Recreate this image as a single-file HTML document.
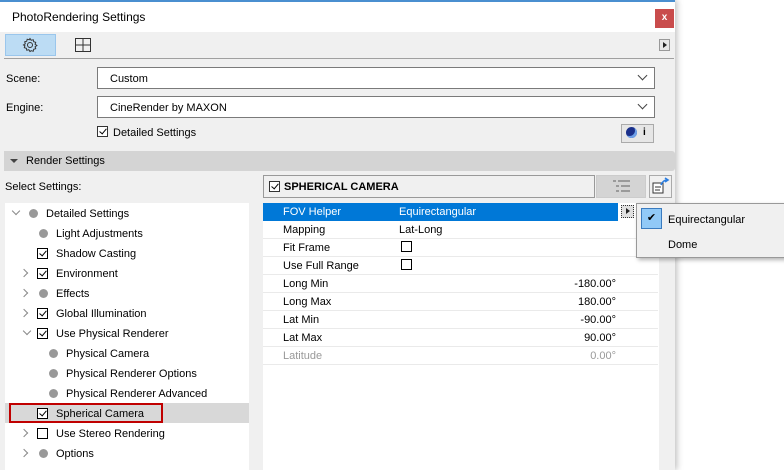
<!DOCTYPE html>
<html><head><style>
body{margin:0;width:784px;height:470px;background:#fff;font-family:"Liberation Sans",sans-serif;font-size:11px;color:#000;position:relative;overflow:hidden}
.a{position:absolute}
.win{left:0;top:0;width:675px;height:470px;background:#f0f0f0;box-shadow:2px 0 6px rgba(0,0,0,.25)}
.dd{background:#fff;border:1px solid #7a7a7a;box-sizing:border-box;height:22px;padding:5px 0 0 12px}
.chev{position:absolute;right:8px;top:4px;width:6px;height:6px;border-right:1px solid #444;border-bottom:1px solid #444;transform:rotate(45deg)}
.cb{position:absolute;width:11px;height:11px;border:1px solid #000;background:#fff;box-sizing:border-box}
.cb.k::after{content:"";position:absolute;left:3px;top:0px;width:3px;height:6px;border-right:1.6px solid #000;border-bottom:1.6px solid #000;transform:rotate(40deg)}
.dot{position:absolute;width:9px;height:9px;border-radius:50%;background:#999}
.tr{position:absolute;left:0;width:245px;height:20px}
.tr span{position:absolute;top:5px}
.ar{position:absolute;width:5px;height:5px;border-right:1px solid #888;border-bottom:1px solid #888}
.row{position:absolute;left:263px;width:395px;height:17px;border-bottom:1px solid #eaeaea}
.row .l{position:absolute;left:20px;top:3px}
.row .v{position:absolute;left:136px;top:3px}
.row .n{position:absolute;right:42px;top:3px}
</style></head><body>
<div class="a win">
 <div class="a" style="left:0;top:0;width:675px;height:2px;background:#4a8fd0"></div>
 <div class="a" style="left:0;top:2px;width:675px;height:30px;background:#fff"></div>
 <div class="a" style="left:12px;top:10px;font-size:12px">PhotoRendering Settings</div>
 <div class="a" style="left:655px;top:9px;width:19px;height:19px;background:#c94c4c;color:#fff;font-size:10px;text-align:center;line-height:18px;font-weight:bold">x</div>
 <div class="a" style="left:5px;top:34px;width:51px;height:22px;background:#bcdcf4;border:1px solid #9ac6ec;box-sizing:border-box"></div>
 <svg class="a" style="left:22px;top:37px" width="16" height="16" viewBox="0 0 16 16"><circle cx="8" cy="8" r="2.5" fill="none" stroke="#333"/><path d="M8 1.5l1.2 1.8 2-.6.5 2 2 .6-.6 2 1.8 1.2-1.8 1.2.6 2-2 .6-.5 2-2-.6L8 14.5l-1.2-1.8-2 .6-.5-2-2-.6.6-2L1.5 8l1.8-1.2-.6-2 2-.6.5-2 2 .6z" fill="none" stroke="#333"/></svg>
 <svg class="a" style="left:75px;top:38px" width="16" height="14"><rect x=".5" y=".5" width="15" height="13" fill="none" stroke="#333"/><path d="M8 .5v13M.5 7h15" stroke="#333"/></svg>
 <div class="a" style="left:659px;top:39px;width:11px;height:12px;border:1px solid #999;background:#e8e8e8;box-sizing:border-box"></div>
 <div class="a" style="left:663px;top:42px;width:0;height:0;border-left:4px solid #222;border-top:3px solid transparent;border-bottom:3px solid transparent"></div>
 <div class="a" style="left:4px;top:58px;width:670px;height:1px;background:#a0a0a0"></div>
 <div class="a" style="left:6px;top:73px">Scene:</div>
 <div class="a dd" style="left:97px;top:67px;width:558px">Custom<div class="chev"></div></div>
 <div class="a" style="left:6px;top:102px">Engine:</div>
 <div class="a dd" style="left:97px;top:96px;width:558px">CineRender by MAXON<div class="chev"></div></div>
 <div class="cb k" style="left:97px;top:126px;border-color:#333"></div>
 <div class="a" style="left:113px;top:127px">Detailed Settings</div>
 <div class="a" style="left:621px;top:124px;width:33px;height:19px;border:1px solid #aaa;box-sizing:border-box;background:#e6e6e6"></div>
 <div class="a" style="left:626px;top:127px;width:11px;height:11px;border-radius:50%;background:#1a2f8a;box-shadow:inset -2px -2px 0 #6ea0e8"></div>
 <div class="a" style="left:643px;top:127px;font-weight:bold;font-size:10px">i</div>
 <div class="a" style="left:4px;top:151px;width:671px;height:20px;background:#d4d4d4;border-radius:0 3px 3px 0"></div>
 <div class="a" style="left:10px;top:159px;border-top:4px solid #444;border-left:4px solid transparent;border-right:4px solid transparent"></div>
 <div class="a" style="left:26px;top:155px">Render Settings</div>
 <div class="a" style="left:5px;top:181px">Select Settings:</div>
 <div class="a" style="left:263px;top:175px;width:332px;height:23px;border:1px solid #999;box-sizing:border-box"></div>
 <div class="cb k" style="left:269px;top:181px;border-color:#333"></div>
 <div class="a" style="left:284px;top:181px;font-weight:bold">SPHERICAL CAMERA</div>
 <div class="a" style="left:596px;top:175px;width:50px;height:23px;background:#d4d4d4;border:1px solid #ccc;box-sizing:border-box"></div>
 <svg class="a" style="left:613px;top:180px" width="17" height="12"><g fill="#9a9a9a"><rect x="0" y="0" width="3" height="2"/><rect x="5" y="0" width="12" height="2"/><rect x="3" y="5" width="3" height="2"/><rect x="8" y="5" width="9" height="2"/><rect x="3" y="10" width="3" height="2"/><rect x="8" y="10" width="9" height="2"/></g></svg>
 <div class="a" style="left:649px;top:175px;width:23px;height:23px;border:1px solid #aaa;box-sizing:border-box"></div>
 <svg class="a" style="left:652px;top:177px" width="18" height="18"><rect x="1" y="6" width="10" height="10" fill="#fff" stroke="#333"/><path d="M3 10h6M3 13h5" stroke="#333"/><path d="M9 8q2-5 6-5M13 1l3 2-3 2" stroke="#2a7de0" stroke-width="1.6" fill="none"/></svg>
 <div class="a" style="left:5px;top:203px;width:244px;height:267px;background:#fff"></div>
 <div class="a" style="left:5px;top:403px;width:244px;height:20px;background:#d8d8d8"></div>
 <div class="a" style="left:5px;top:0;width:250px;height:470px">
  <div class="tr" style="top:203px"><div class="ar" style="left:8px;top:5px;transform:rotate(45deg)"></div><div class="dot" style="left:24px;top:6px"></div><span style="left:41px">Detailed Settings</span></div>
  <div class="tr" style="top:223px"><div class="dot" style="left:34px;top:6px"></div><span style="left:51px">Light Adjustments</span></div>
  <div class="tr" style="top:243px"><div class="cb k" style="left:32px;top:5px"></div><span style="left:51px">Shadow Casting</span></div>
  <div class="tr" style="top:263px"><div class="ar" style="left:16px;top:7px;transform:rotate(-45deg)"></div><div class="cb k" style="left:32px;top:5px"></div><span style="left:51px">Environment</span></div>
  <div class="tr" style="top:283px"><div class="ar" style="left:16px;top:7px;transform:rotate(-45deg)"></div><div class="dot" style="left:34px;top:6px"></div><span style="left:51px">Effects</span></div>
  <div class="tr" style="top:303px"><div class="ar" style="left:16px;top:7px;transform:rotate(-45deg)"></div><div class="cb k" style="left:32px;top:5px"></div><span style="left:51px">Global Illumination</span></div>
  <div class="tr" style="top:323px"><div class="ar" style="left:19px;top:5px;transform:rotate(45deg)"></div><div class="cb k" style="left:32px;top:5px"></div><span style="left:51px">Use Physical Renderer</span></div>
  <div class="tr" style="top:343px"><div class="dot" style="left:44px;top:6px"></div><span style="left:61px">Physical Camera</span></div>
  <div class="tr" style="top:363px"><div class="dot" style="left:44px;top:6px"></div><span style="left:61px">Physical Renderer Options</span></div>
  <div class="tr" style="top:383px"><div class="dot" style="left:44px;top:6px"></div><span style="left:61px">Physical Renderer Advanced</span></div>
  <div class="tr" style="top:403px"><div class="cb k" style="left:32px;top:5px"></div><span style="left:51px">Spherical Camera</span></div>
  <div class="tr" style="top:423px"><div class="ar" style="left:16px;top:7px;transform:rotate(-45deg)"></div><div class="cb" style="left:32px;top:5px"></div><span style="left:51px">Use Stereo Rendering</span></div>
  <div class="tr" style="top:443px"><div class="ar" style="left:16px;top:7px;transform:rotate(-45deg)"></div><div class="dot" style="left:34px;top:6px"></div><span style="left:51px">Options</span></div>
 </div>
 <div class="a" style="left:9px;top:403px;width:154px;height:20px;border:2px solid #c00000;box-sizing:border-box"></div>
 <div class="a" style="left:263px;top:203px;width:396px;height:267px;background:#fff"></div>
 <div class="row" style="top:203px;width:355px;background:#0078d7;color:#fff;border:none;height:18px"><span class="l">FOV Helper</span><span class="v">Equirectangular</span></div>
 <div class="a" style="left:621px;top:205px;width:13px;height:13px;border:1px dotted #333;background:#e0e0e0;box-sizing:border-box"></div>
 <div class="a" style="left:626px;top:208px;border-left:4px solid #222;border-top:3px solid transparent;border-bottom:3px solid transparent"></div>
 <div class="row" style="top:221px"><span class="l">Mapping</span><span class="v">Lat-Long</span></div>
 <div class="row" style="top:239px"><span class="l">Fit Frame</span><div class="cb" style="left:138px;top:2px"></div></div>
 <div class="row" style="top:257px"><span class="l">Use Full Range</span><div class="cb" style="left:138px;top:2px"></div></div>
 <div class="row" style="top:275px"><span class="l">Long Min</span><span class="n">-180.00°</span></div>
 <div class="row" style="top:293px"><span class="l">Long Max</span><span class="n">180.00°</span></div>
 <div class="row" style="top:311px"><span class="l">Lat Min</span><span class="n">-90.00°</span></div>
 <div class="row" style="top:329px"><span class="l">Lat Max</span><span class="n">90.00°</span></div>
 <div class="row" style="top:347px;color:#999"><span class="l">Latitude</span><span class="n">0.00°</span></div>
</div>
<div class="a" style="left:636px;top:203px;width:150px;height:55px;background:#f0f0f0;border:1px solid #999;box-sizing:border-box;box-shadow:2px 2px 4px rgba(0,0,0,.3)"></div>
<div class="a" style="left:641px;top:208px;width:21px;height:21px;background:#91c9f7;border:1px solid #3a7bbf;box-sizing:border-box;text-align:center;font-size:11px;line-height:19px">✔</div>
<div class="a" style="left:668px;top:214px">Equirectangular</div>
<div class="a" style="left:668px;top:239px">Dome</div>
</body></html>
